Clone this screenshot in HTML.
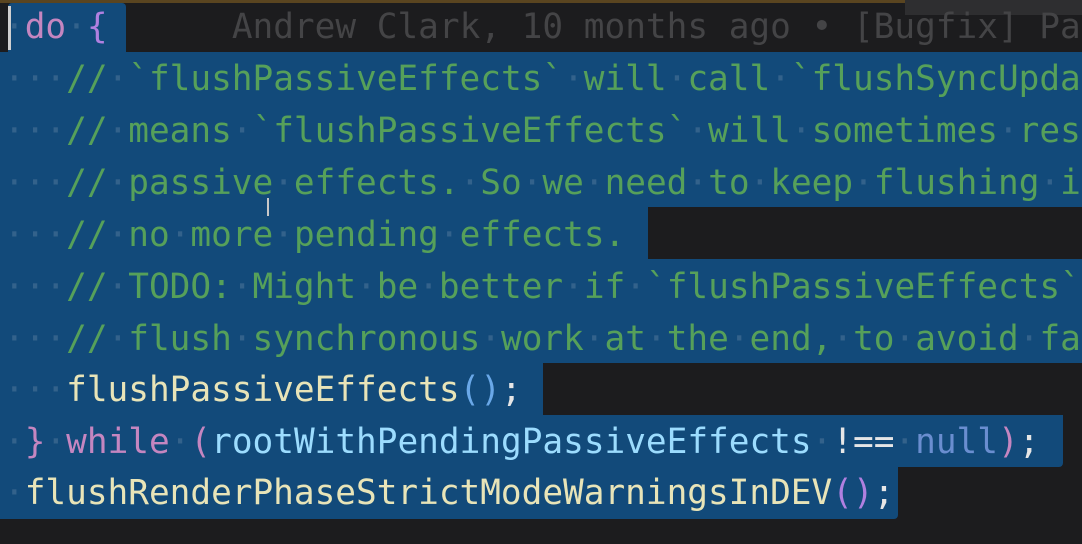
<!DOCTYPE html>
<html><head><meta charset="utf-8"><style>
html,body{margin:0;padding:0;}
body{width:1082px;height:544px;background:#1c1c1e;position:relative;overflow:hidden;font-family:"DejaVu Sans Mono","Liberation Mono",monospace;font-size:34.4px;}
.sel{position:absolute;background:#124a7a;}
.row{position:absolute;left:4px;height:52px;line-height:52px;white-space:pre;color:#e6e6e6;}
.d{color:rgba(150,170,190,0.25);}
.c{color:#56a05a;}
.k{color:#c586c0;}
.v{color:#9cdcfe;}
.f{color:#e8e4b8;}
.p{color:#b080e0;}
.b{color:#6aa8e8;}
.n{color:#6a8ed0;}
.g{color:#444446;}
</style></head><body>
<div style="position:absolute;left:0;top:0;width:1082px;height:3px;background:#5a4520;"></div>
<div style="position:absolute;left:905px;top:0;width:177px;height:15px;background:#2e2e30;"></div>
<div class="sel" style="left:8px;top:3px;width:118px;height:49px;border-radius:4px 4px 0 0;"></div>
<div class="sel" style="left:0;top:52px;width:1082px;height:155px;"></div>
<div class="sel" style="left:0;top:207px;width:648px;height:52px;"></div>
<div class="sel" style="left:0;top:259px;width:1082px;height:104px;"></div>
<div class="sel" style="left:0;top:363px;width:543px;height:52px;"></div>
<div class="sel" style="left:0;top:415px;width:1063px;height:52px;border-radius:0 0 4px 0;"></div>
<div class="sel" style="left:0;top:467px;width:898px;height:52px;border-radius:0 0 4px 0;"></div>
<div style="position:absolute;left:8px;top:6px;width:3px;height:44px;background:#d0d0d0;"></div>
<div class="row" style="top:1px"><span class="d">·</span><span class="k">do</span><span class="d">·</span><span class="p">{</span>      <span class="g">Andrew Clark, 10 months ago • [Bugfix] Pa</span></div>
<div class="row c" style="top:53px"><span class="d">···</span>//<span class="d">·</span>`flushPassiveEffects`<span class="d">·</span>will<span class="d">·</span>call<span class="d">·</span>`flushSyncUpda</div>
<div class="row c" style="top:105px"><span class="d">···</span>//<span class="d">·</span>means<span class="d">·</span>`flushPassiveEffects`<span class="d">·</span>will<span class="d">·</span>sometimes<span class="d">·</span>res</div>
<div class="row c" style="top:157px"><span class="d">···</span>//<span class="d">·</span>passive<span class="d">·</span>effects.<span class="d">·</span>So<span class="d">·</span>we<span class="d">·</span>need<span class="d">·</span>to<span class="d">·</span>keep<span class="d">·</span>flushing<span class="d">·</span>i</div>
<div class="row c" style="top:209px"><span class="d">···</span>//<span class="d">·</span>no<span class="d">·</span>more<span class="d">·</span>pending<span class="d">·</span>effects.</div>
<div class="row c" style="top:261px"><span class="d">···</span>//<span class="d">·</span>TODO:<span class="d">·</span>Might<span class="d">·</span>be<span class="d">·</span>better<span class="d">·</span>if<span class="d">·</span>`flushPassiveEffects`</div>
<div class="row c" style="top:313px"><span class="d">···</span>//<span class="d">·</span>flush<span class="d">·</span>synchronous<span class="d">·</span>work<span class="d">·</span>at<span class="d">·</span>the<span class="d">·</span>end,<span class="d">·</span>to<span class="d">·</span>avoid<span class="d">·</span>fa</div>
<div class="row" style="top:364px"><span class="d">···</span><span class="f">flushPassiveEffects</span><span class="b">()</span>;</div>
<div class="row" style="top:416px"><span class="d">·</span><span class="k">}</span><span class="d">·</span><span class="k">while</span><span class="d">·</span><span class="k">(</span><span class="v">rootWithPendingPassiveEffects</span><span class="d">·</span>!==<span class="d">·</span><span class="n">null</span><span class="k">)</span>;</div>
<div class="row" style="top:467px"><span class="d">·</span><span class="f">flushRenderPhaseStrictModeWarningsInDEV</span><span class="p">()</span>;</div>
<div style="position:absolute;left:267px;top:198px;width:2px;height:18px;background:#c8c8c8;"></div>
</body></html>
